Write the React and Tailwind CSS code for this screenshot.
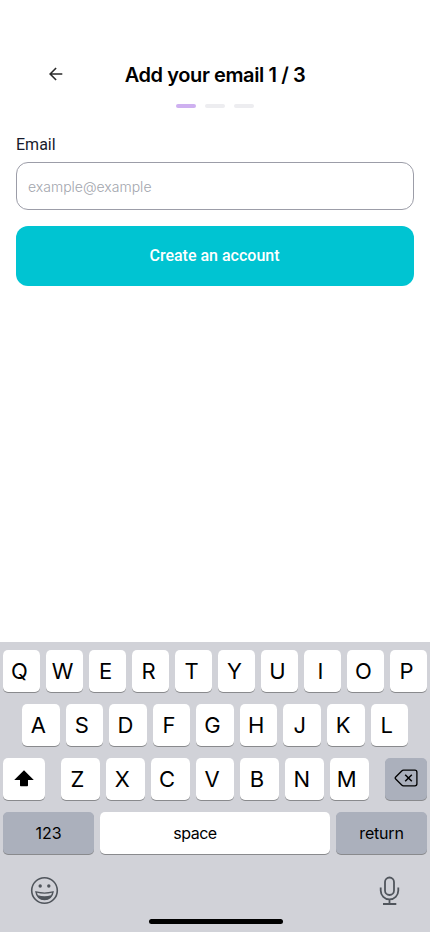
function Key({ children, className = '' }) {
  return (
    <button
      type="button"
      className={`flex h-[42px] items-center justify-center rounded-[5px] text-black shadow-[0_1px_0_#898a8d] ${className}`}
    >
      {children}
    </button>
  );
}

function Letters({ keys, className, keyClass = 'pr-[5px]' }) {
  return (
    <div className={`flex gap-[6px] ${className}`}>
      {keys.split('').map((k) => (
        <Key key={k} className={`min-w-0 flex-1 bg-white pb-px text-[22px] leading-none ${keyClass}`}>
          {k}
        </Key>
      ))}
    </div>
  );
}

function Keyboard() {
  return (
    <section className="flex h-[290px] flex-col bg-[#d1d2d8] px-[3px] pt-2 font-['Inter',sans-serif]">
      <div className="flex flex-col gap-3">
        <Letters keys="QWERTYUIOP" keyClass="pr-1" />
        <Letters keys="ASDFGHJKL" className="mx-[19px]" />
        <div className="flex gap-4">
          <Key className="w-[42px] shrink-0 bg-white">
            <svg width="20" height="17" viewBox="0 0 20 17" fill="#000" className="mb-px">
              <path d="M10 .3 19.800 10H14v5.200c0 .6-.4 1-1 1H7c-.6 0-1-.4-1-1V10H.2Z" />
            </svg>
          </Key>
          <Letters keys="ZXCVBNM" className="flex-1" keyClass="pr-[6px]" />
          <Key className="w-[42px] shrink-0 bg-[#abb0bc]">
            <svg width="24" height="18" viewBox="0 0 24 18" fill="none" stroke="#000" strokeWidth="1.3" className="mb-[2px] mr-px">
              <path d="M9.500 1.200h11.400a2 2 0 0 1 2 2v11.600a2 2 0 0 1-2 2H9.500c-.7 0-1.300-.3-1.800-.8L1.700 10c-.6-.6-.6-1.400 0-2L7.700 2c.5-.5 1.100-.8 1.800-.8Z" />
              <path d="m11.200 5.700 6.600 6.600M17.800 5.700l-6.600 6.600" strokeWidth="1.500" />
            </svg>
          </Key>
        </div>
        <div className="flex gap-[6px] text-[16px]">
          <Key className="w-[91px] bg-[#abb0bc]">123</Key>
          <Key className="flex-1 bg-white pr-10 tracking-[-0.5px]">space</Key>
          <Key className="w-[91px] bg-[#abb0bc] tracking-[-0.2px]">return</Key>
        </div>
      </div>
      <div className="mt-[21px] flex h-[30px] items-center justify-between px-[27px] text-[#50555c]">
        <svg width="29" height="29" viewBox="0 0 29 29" fill="none" stroke="currentColor">
          <g transform="translate(0 .5)">
            <circle cx="14.500" cy="14" r="12.800" strokeWidth="1.600" />
            <circle cx="10.200" cy="9.500" r="1.700" fill="currentColor" stroke="none" />
            <circle cx="18.800" cy="9.500" r="1.700" fill="currentColor" stroke="none" />
            <path d="M5.900 15.400c5.500 1.500 11.700 1.500 17.200 0-.5 4.500-3.900 7.700-8.600 7.700s-8.100-3.200-8.600-7.700Z" strokeWidth="1.200" fill="currentColor" />
            <path d="M7 16.300c4.500 1.200 10.500 1.200 15 0-.2.900-.5 1.700-1 2.400-4 1.300-9 1.300-13 0-.5-.7-.8-1.500-1-2.400Z" fill="#d1d2d8" stroke="none" />
          </g>
        </svg>
        <svg width="21" height="30" viewBox="0 0 21 30" fill="none" stroke="currentColor" strokeWidth="1.800">
          <rect x="6" y="2.500" width="9" height="17.500" rx="4.500" />
          <path d="M1.700 12.600v3a8.800 8.800 0 0 0 17.600 0v-3M10.500 24.500v4M4 29h13.300" />
        </svg>
      </div>
      <div className="ml-[146px] mt-[14px] h-[5px] w-[134px] rounded-full bg-black" />
    </section>
  );
}

export default function App() {
  return (
    <main className="flex h-[932px] w-[430px] flex-col overflow-hidden bg-white font-['Roboto',sans-serif]">
      <header className="mt-[60px] grid grid-cols-[112px_1fr_112px] items-center">
        <button type="button" aria-label="Back" className="flex justify-center pb-[3px]">
          <svg width="14" height="14" viewBox="0 0 14 14" fill="none" stroke="#2a2a2a" strokeWidth="1.600">
            <path d="M13.300 7H1.200M7.100 1 1.100 7l6 6" />
          </svg>
        </button>
        <h1 className="whitespace-nowrap text-center font-['Inter',sans-serif] text-[20px] font-semibold leading-[30px] tracking-[-0.4px] text-black">
          Add your email 1 / 3
        </h1>
      </header>
      <div className="mt-[14px] flex justify-center gap-[9px]">
        <span className="h-1 w-5 rounded-full bg-[#ceb0f0]" />
        <span className="h-1 w-5 rounded-full bg-[#ededf0]" />
        <span className="h-1 w-5 rounded-full bg-[#ededf0]" />
      </div>
      <form className="flex flex-1 flex-col px-4 pt-[25px]">
        <label htmlFor="email" className="h-[29px] text-[16px] leading-6 text-[#171a2b]">Email</label>
        <input
          id="email"
          type="email"
          placeholder="example@example"
          className="h-12 w-full rounded-[12px] border border-[#9c9da8] px-[11px] font-['Inter',sans-serif] text-[14px] font-light outline-none placeholder:text-[#a2a5ad]"
        />
        <button type="button" className="mt-4 h-[60px] rounded-[12px] bg-[#00c4d2] pr-px text-[16px] font-medium text-white">
          Create an account
        </button>
      </form>
      <Keyboard />
    </main>
  );
}
